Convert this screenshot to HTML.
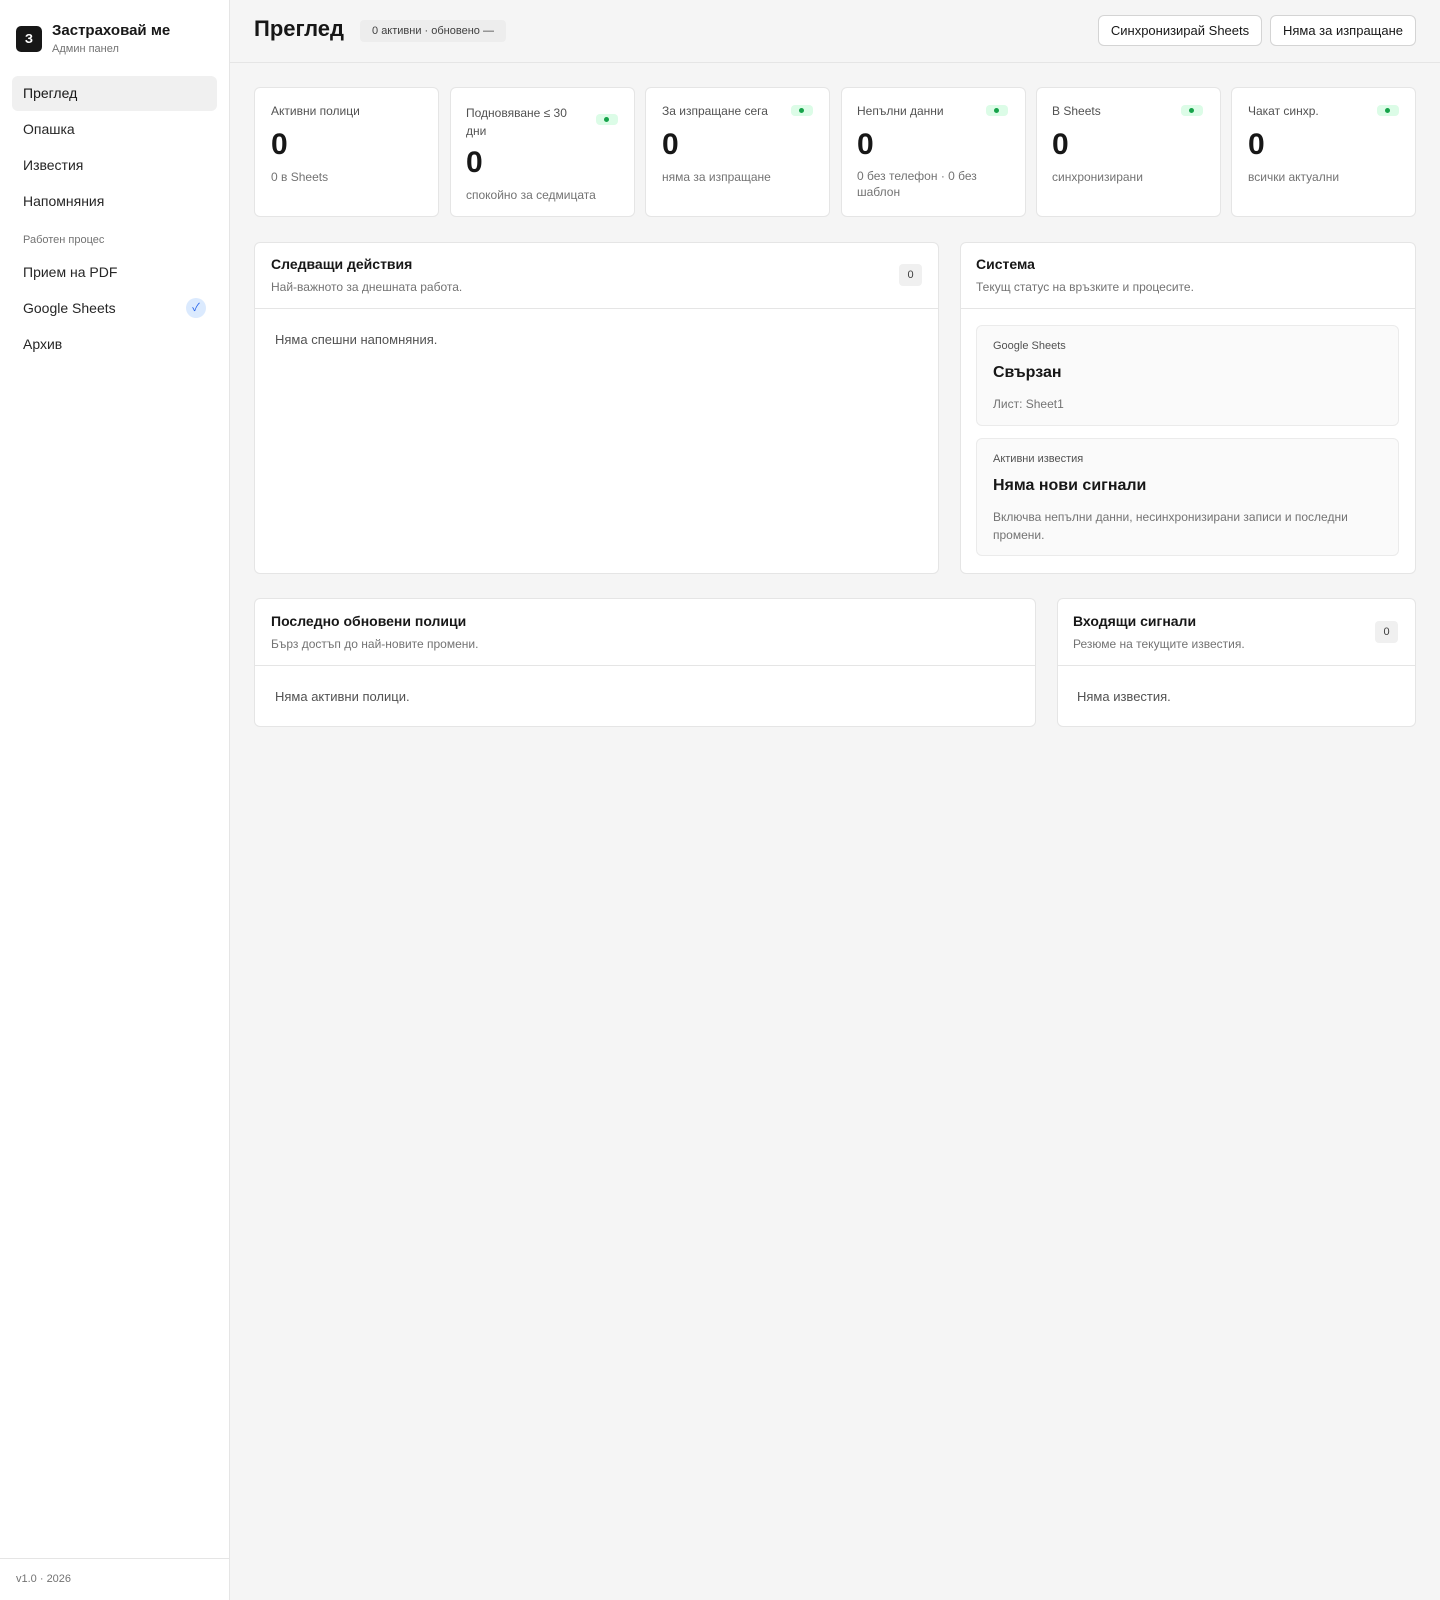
<!DOCTYPE html>
<html><head><meta charset="utf-8"><style>
*{box-sizing:border-box;margin:0;padding:0}
body{width:1440px;height:1600px;background:#f5f5f5;font-family:"Liberation Sans","Noto Sans CJK SC",sans-serif;color:#171717;position:relative;overflow:hidden}
.abs{position:absolute}
.side{left:0;top:0;width:230px;height:1600px;background:#fff;border-right:1px solid #e5e5e5}
.logo{left:16px;top:26px;width:26px;height:26px;background:#171717;border-radius:5px;color:#fff;font-weight:bold;font-size:13px;text-align:center;line-height:26px}
.nav{left:12px;width:205px;height:35px;line-height:35px;padding-left:11px;font-size:14px;color:#262626;border-radius:6px}
.card{background:#fff;border:1px solid #e5e5e5;border-radius:6px}
.lbl{font-size:12px;color:#525252}
.num{font-size:30px;font-weight:bold;color:#171717}
.sub{font-size:12px;color:#737373;line-height:16px}
.dot{width:22px;height:11px;border-radius:4px;background:#dcfce7}
.dot:after{content:"";position:absolute;left:8px;top:3px;width:5px;height:5px;border-radius:50%;background:#16a34a}
.btn{top:15px;height:31px;background:#fff;border:1px solid #d4d4d4;border-radius:6px;font-size:13px;line-height:29px;text-align:center;color:#171717}
.pt{font-size:14px;font-weight:bold}
.ps{font-size:12px;color:#737373}
.cnt{width:23px;height:22px;background:#f0f0f0;border-radius:4px;font-size:11px;text-align:center;line-height:22px;color:#404040}
.hr{height:1px;background:#e5e5e5}
.body{font-size:13px;color:#525252}
.ib{background:#fafafa;border:1px solid #ebebeb;border-radius:6px}
</style></head><body>
<div class="abs side"></div>
<div class="abs logo">З</div>
<div class="abs" style="left:52px;top:22px;font-size:15px;font-weight:bold">Застраховай ме</div>
<div class="abs" style="left:52px;top:43px;font-size:11px;color:#737373">Админ панел</div>
<div class="abs nav" style="top:76px;background:#f0f0f0;color:#171717">Преглед</div>
<div class="abs nav" style="top:112px">Опашка</div>
<div class="abs nav" style="top:148px">Известия</div>
<div class="abs nav" style="top:184px">Напомняния</div>
<div class="abs" style="left:23px;top:234px;font-size:11px;color:#737373">Работен процес</div>
<div class="abs nav" style="top:255px">Прием на PDF</div>
<div class="abs nav" style="top:291px">Google Sheets</div>
<div class="abs" style="left:186px;top:298px;width:20px;height:20px;border-radius:50%;background:#dbeafe;color:#2563eb;font-size:11px;text-align:center;line-height:20px">✓</div>
<div class="abs nav" style="top:327px">Архив</div>
<div class="abs hr" style="left:0;top:1558px;width:229px"></div>
<div class="abs" style="left:16px;top:1573px;font-size:11px;color:#737373">v1.0 · 2026</div>

<div class="abs hr" style="left:230px;top:62px;width:1210px"></div>
<div class="abs" style="left:254px;top:16px;font-size:22px;font-weight:bold">Преглед</div>
<div class="abs" style="left:360px;top:20px;width:146px;height:22px;background:#ededed;border-radius:4px;font-size:11px;line-height:22px;text-align:center;color:#404040">0 активни · обновено —</div>
<div class="abs btn" style="left:1098px;width:164px">Синхронизирай Sheets</div>
<div class="abs btn" style="left:1270px;width:146px">Няма за изпращане</div>

<div class="abs card" style="left:254px;top:87px;width:185px;height:130px"></div>
<div class="abs lbl" style="left:271px;top:104px">Активни полици</div>
<div class="abs num" style="left:271px;top:128px">0</div>
<div class="abs sub" style="left:271px;top:169px">0 в Sheets</div>

<div class="abs card" style="left:450px;top:87px;width:185px;height:130px"></div>
<div class="abs lbl" style="left:466px;top:104px;width:120px;line-height:18px">Подновяване ≤ 30 дни</div>
<div class="abs dot" style="left:596px;top:114px"></div>
<div class="abs num" style="left:466px;top:146px">0</div>
<div class="abs sub" style="left:466px;top:187px">спокойно за седмицата</div>

<div class="abs card" style="left:645px;top:87px;width:185px;height:130px"></div>
<div class="abs lbl" style="left:662px;top:104px">За изпращане сега</div>
<div class="abs dot" style="left:791px;top:105px"></div>
<div class="abs num" style="left:662px;top:128px">0</div>
<div class="abs sub" style="left:662px;top:169px">няма за изпращане</div>

<div class="abs card" style="left:841px;top:87px;width:185px;height:130px"></div>
<div class="abs lbl" style="left:857px;top:104px">Непълни данни</div>
<div class="abs dot" style="left:986px;top:105px"></div>
<div class="abs num" style="left:857px;top:128px">0</div>
<div class="abs sub" style="left:857px;top:168px;width:140px">0 без телефон · 0 без шаблон</div>

<div class="abs card" style="left:1036px;top:87px;width:185px;height:130px"></div>
<div class="abs lbl" style="left:1052px;top:104px">В Sheets</div>
<div class="abs dot" style="left:1181px;top:105px"></div>
<div class="abs num" style="left:1052px;top:128px">0</div>
<div class="abs sub" style="left:1052px;top:169px">синхронизирани</div>

<div class="abs card" style="left:1231px;top:87px;width:185px;height:130px"></div>
<div class="abs lbl" style="left:1248px;top:104px">Чакат синхр.</div>
<div class="abs dot" style="left:1377px;top:105px"></div>
<div class="abs num" style="left:1248px;top:128px">0</div>
<div class="abs sub" style="left:1248px;top:169px">всички актуални</div>

<div class="abs card" style="left:254px;top:242px;width:685px;height:332px"></div>
<div class="abs pt" style="left:271px;top:256px">Следващи действия</div>
<div class="abs ps" style="left:271px;top:280px">Най-важното за днешната работа.</div>
<div class="abs cnt" style="left:899px;top:264px">0</div>
<div class="abs hr" style="left:255px;top:308px;width:683px"></div>
<div class="abs body" style="left:275px;top:332px">Няма спешни напомняния.</div>

<div class="abs card" style="left:960px;top:242px;width:456px;height:332px"></div>
<div class="abs pt" style="left:976px;top:256px">Система</div>
<div class="abs ps" style="left:976px;top:280px">Текущ статус на връзките и процесите.</div>
<div class="abs hr" style="left:961px;top:308px;width:454px"></div>
<div class="abs ib" style="left:976px;top:325px;width:423px;height:101px"></div>
<div class="abs" style="left:993px;top:340px;font-size:11px;color:#525252">Google Sheets</div>
<div class="abs" style="left:993px;top:364px;font-size:16px;font-weight:bold">Свързан</div>
<div class="abs ps" style="left:993px;top:397px">Лист: Sheet1</div>
<div class="abs ib" style="left:976px;top:438px;width:423px;height:118px"></div>
<div class="abs" style="left:993px;top:453px;font-size:11px;color:#525252">Активни известия</div>
<div class="abs" style="left:993px;top:477px;font-size:16px;font-weight:bold">Няма нови сигнали</div>
<div class="abs" style="left:993px;top:508px;width:390px;font-size:12px;line-height:18px;color:#737373">Включва непълни данни, несинхронизирани записи и последни промени.</div>

<div class="abs card" style="left:254px;top:598px;width:782px;height:129px"></div>
<div class="abs pt" style="left:271px;top:613px">Последно обновени полици</div>
<div class="abs ps" style="left:271px;top:637px">Бърз достъп до най-новите промени.</div>
<div class="abs hr" style="left:255px;top:665px;width:780px"></div>
<div class="abs body" style="left:275px;top:689px">Няма активни полици.</div>

<div class="abs card" style="left:1057px;top:598px;width:359px;height:129px"></div>
<div class="abs pt" style="left:1073px;top:613px">Входящи сигнали</div>
<div class="abs ps" style="left:1073px;top:637px">Резюме на текущите известия.</div>
<div class="abs cnt" style="left:1375px;top:621px">0</div>
<div class="abs hr" style="left:1058px;top:665px;width:357px"></div>
<div class="abs body" style="left:1077px;top:689px">Няма известия.</div>
</body></html>
